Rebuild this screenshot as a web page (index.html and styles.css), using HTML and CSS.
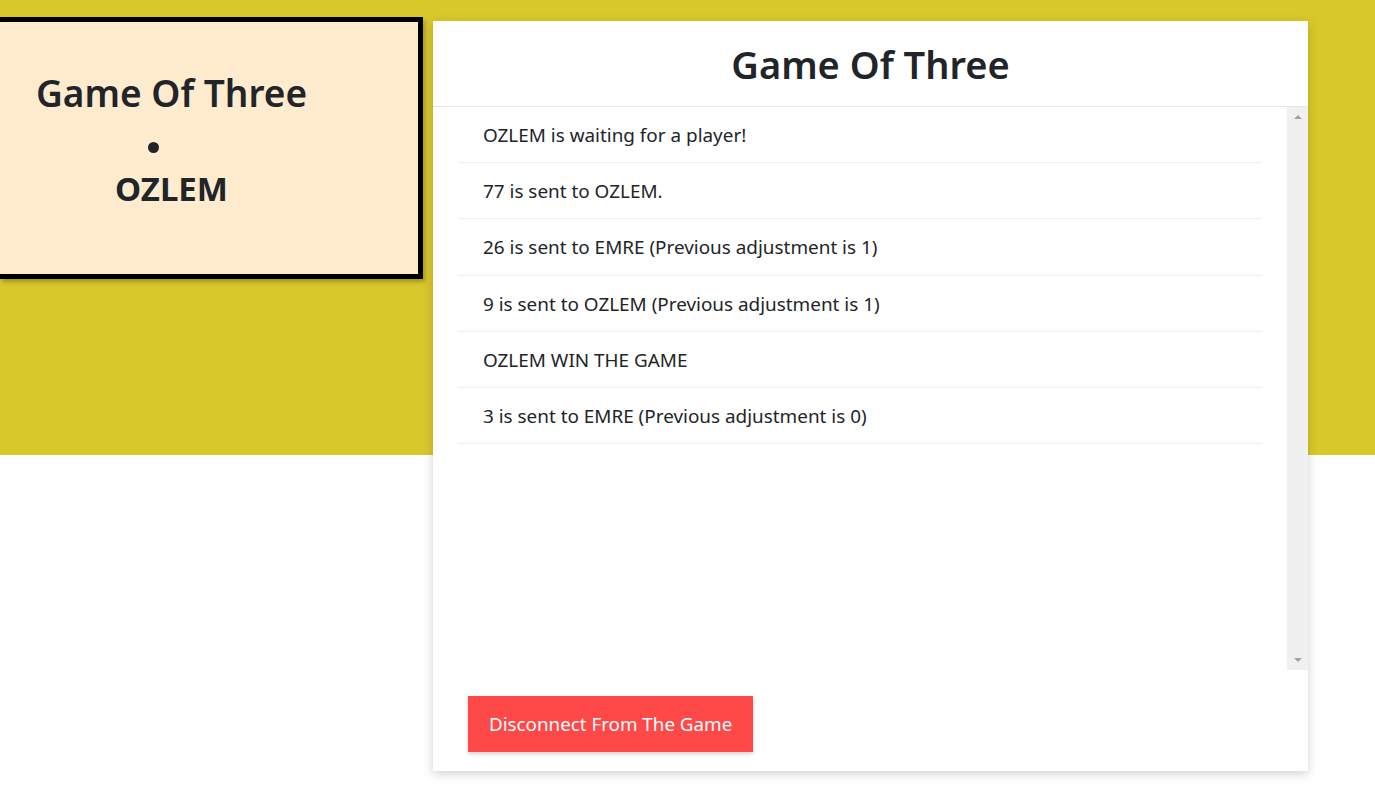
FILE: index.html
```html
<!DOCTYPE html>
<html>
<head>
<meta charset="utf-8">
<title>Game Of Three</title>
<link rel="stylesheet" href="styles.css">
</head>
<body>
<div class="page">
  <div class="player-card">
    <div class="player-inner">
      <div class="player-title">Game Of Three</div>
      <div class="player-dot-row"><span class="player-dot"></span></div>
      <div class="player-name">OZLEM</div>
    </div>
  </div>
  <div class="game-card">
    <div class="game-header">Game Of Three</div>
    <div class="game-body">
      <ul class="log">
        <li class="log-item">OZLEM is waiting for a player!</li>
        <li class="log-item">77 is sent to OZLEM.</li>
        <li class="log-item">26 is sent to EMRE (Previous adjustment is 1)</li>
        <li class="log-item">9 is sent to OZLEM (Previous adjustment is 1)</li>
        <li class="log-item">OZLEM WIN THE GAME</li>
        <li class="log-item">3 is sent to EMRE (Previous adjustment is 0)</li>
      </ul>
      <div class="scrollbar">
        <span class="arrow arrow-up"></span>
        <span class="arrow arrow-down"></span>
      </div>
    </div>
    <div class="game-footer">
      <button class="btn-disconnect">Disconnect From The Game</button>
    </div>
  </div>
</div>
</body>
</html>
```
FILE: styles.css
```css
html, body {
  margin: 0;
  padding: 0;
}
body {
  font-family: "Noto Sans", "Open Sans", sans-serif;
  color: #212529;
  background: linear-gradient(to bottom, #d9c82b 0, #d9c82b 455px, #ffffff 455px);
  min-height: 804px;
}
.page {
  display: flex;
  align-items: flex-start;
  gap: 10px;
}
.player-card {
  margin-top: 17px;
  box-sizing: border-box;
  width: 423px;
  height: 262px;
  background: #ffebcd;
  border: 5px solid #000;
  border-left: none;
  box-shadow: 2px 3px 4px rgba(0,0,0,0.25);
  padding-left: 36px;
}
.player-inner {
  display: inline-block;
  text-align: center;
  padding-top: 44px;
}
.player-title {
  font-size: 37px;
  font-weight: 600;
  line-height: 54px;
}
.player-dot-row {
  margin-top: 8px;
  height: 39px;
  display: flex;
  justify-content: center;
  align-items: center;
}
.player-dot {
  display: block;
  width: 11px;
  height: 11px;
  border-radius: 50%;
  background: #212529;
  margin-right: 36px;
}
.player-name {
  font-size: 33px;
  font-weight: 700;
  line-height: 44px;
}
.game-card {
  margin-top: 21px;
  width: 875px;
  background: #fff;
  box-shadow: 0 3px 10px rgba(0,0,0,0.18);
}
.game-header {
  height: 85px;
  border-bottom: 1px solid #e6e6e6;
  display: flex;
  align-items: center;
  justify-content: center;
  font-size: 38px;
  font-weight: 600;
}
.game-body {
  height: 563px;
  display: flex;
}
.log {
  flex: 1;
  list-style: none;
  margin: 0;
  padding: 0 25px;
}
.log-item {
  height: 56.2px;
  box-sizing: border-box;
  border-bottom: 1px solid #efefef;
  padding: 1px 0 0 25px;
  display: flex;
  align-items: center;
  font-size: 18.9px;
}
.scrollbar {
  width: 21px;
  background: #f0f0f0;
  display: flex;
  flex-direction: column;
  justify-content: space-between;
  align-items: center;
  padding: 8px 0;
  box-sizing: border-box;
}
.arrow {
  width: 0;
  height: 0;
  border-left: 4px solid transparent;
  border-right: 4px solid transparent;
}
.arrow-up {
  border-bottom: 4px solid #a3a3a3;
}
.arrow-down {
  border-top: 4px solid #a3a3a3;
}
.game-footer {
  padding: 26px 35px 19px;
}
.btn-disconnect {
  display: block;
  height: 56px;
  padding: 0 21px;
  border: none;
  background: #ff4949;
  color: #fff;
  font-family: "Noto Sans", "Open Sans", sans-serif;
  font-size: 18.8px;
  box-shadow: 0 2px 4px rgba(0,0,0,0.18);
}
```
